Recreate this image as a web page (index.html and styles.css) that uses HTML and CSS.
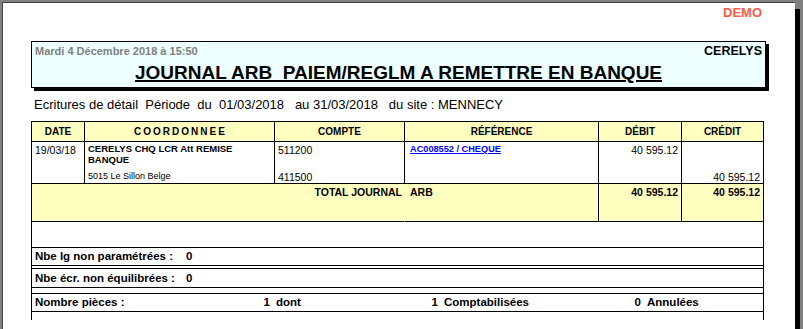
FILE: index.html
```html
<!DOCTYPE html>
<html lang="fr">
<head>
<meta charset="utf-8">
<title>Journal ARB</title>
<link rel="stylesheet" href="styles.css">
</head>
<body>
<div class="page">
  <div class="report">
    <div class="demo">DEMO</div>
    <div class="head-box">
      <div class="head-top">
        <span class="stamp">Mardi 4 Décembre 2018 à 15:50</span>
        <span class="company">CERELYS</span>
      </div>
      <h1 class="title">JOURNAL ARB  PAIEM/REGLM A REMETTRE EN BANQUE</h1>
    </div>
    <p class="period">Ecritures de détail  Période  du  01/03/2018   au 31/03/2018   du site : MENNECY</p>
    <div class="grid">
      <div class="th">DATE</div>
      <div class="th spaced">COORDONNEE</div>
      <div class="th">COMPTE</div>
      <div class="th">RÉFÉRENCE</div>
      <div class="th">DÉBIT</div>
      <div class="th">CRÉDIT</div>

      <div class="td"><span class="val">19/03/18</span></div>
      <div class="td">
        <span class="name">CERELYS CHQ LCR Att REMISE BANQUE</span>
        <span class="addr">5015 Le Sillon Belge</span>
      </div>
      <div class="td"><span class="val">511200</span><span class="val">411500</span></div>
      <div class="td td-ref"><a class="ref" href="#">AC008552 / CHEQUE</a></div>
      <div class="td num"><span class="val">40 595.12</span></div>
      <div class="td num bottom"><span class="val">40 595.12</span></div>

      <div class="tt tt-label">TOTAL JOURNAL</div>
      <div class="tt tt-ref">ARB</div>
      <div class="tt num">40 595.12</div>
      <div class="tt num">40 595.12</div>
    </div>
    <div class="summary">
      <div class="blank"></div>
      <div class="srow s1"><span>Nbe lg non paramétrées :</span><span>0</span></div>
      <div class="sgap g1"></div>
      <div class="srow s2"><span>Nbe écr. non équilibrées :</span><span>0</span></div>
      <div class="sgap g2"></div>
      <div class="srow s3">
        <span>Nombre pièces :</span>
        <span class="n">1</span>
        <span class="w">dont</span>
        <span class="n">1</span>
        <span class="w">Comptabilisées</span>
        <span class="n">0</span>
        <span class="w">Annulées</span>
      </div>
      <div class="tail"></div>
    </div>
  </div>
</div>
</body>
</html>
```
FILE: styles.css
```css
* { box-sizing: border-box; margin: 0; padding: 0; }
html, body { height: 100%; }
body {
  background: #808080;
  overflow: hidden;
  font-family: "Liberation Sans", Arial, sans-serif;
  color: #000;
  padding: 2px 0 0 2px;
}
.page {
  width: 793px;
  height: 327px;
  overflow: hidden;
  background: #fff;
  border-top: 1px solid #404040;
  border-left: 1px solid #404040;
  box-shadow: 5px 7px 0 #000;
  padding: 2px 0 0 28px;
}
.report { width: 735px; }
.demo {
  text-align: right;
  padding-right: 4px;
  font-size: 13px;
  line-height: 15px;
  font-weight: bold;
  color: #ff5a46;
}
.head-box {
  margin-top: 21px;
  border: 1px solid #000;
  background: #eeffff;
  box-shadow: 3px 3px 0 #000;
  padding: 2px 3px 3px 3px;
}
.head-top {
  display: flex;
  justify-content: space-between;
  align-items: baseline;
  height: 14px;
  line-height: 14px;
}
.stamp { font-size: 11px; font-weight: bold; color: #808080; }
.company { font-size: 12.5px; font-weight: bold; }
.title {
  margin-top: 4px;
  text-align: center;
  font-size: 19px;
  line-height: 22px;
  font-weight: bold;
  text-decoration: underline;
  text-decoration-thickness: 2px;
  text-underline-offset: 1px;
  white-space: pre;
}
.period {
  margin-top: 9px;
  padding-left: 3px;
  font-size: 13px;
  line-height: 16px;
  white-space: pre;
}
.grid {
  margin-top: 8px;
  width: 733px;
  display: grid;
  grid-template-columns: 53px 190px 130px 194px 83px 82px;
  border-top: 1px solid #000;
  border-left: 1px solid #000;
}
.grid > div {
  border-right: 1px solid #000;
  border-bottom: 1px solid #000;
}
.th {
  height: 20px;
  background: #ffffc0;
  font-size: 10px;
  font-weight: bold;
  line-height: 19px;
  text-align: center;
}
.spaced { letter-spacing: 2px; padding-left: 2px; }
.td {
  height: 42px;
  display: flex;
  flex-direction: column;
  justify-content: space-between;
  align-items: flex-start;
  padding: 2px 3px 0 3px;
  font-size: 10.5px;
  line-height: 12px;
}
.td.num { align-items: flex-end; }
.td.bottom { justify-content: flex-end; }
.name {
  display: block;
  max-width: 170px;
  font-size: 9.5px;
  line-height: 10.5px;
  font-weight: bold;
}
.addr {
  font-size: 9px;
  line-height: 11px;
  margin-bottom: 1px;
}
.td-ref { padding-left: 5px; }
.ref {
  font-size: 9.2px;
  line-height: 11px;
  font-weight: bold;
  color: #0000ff;
  text-decoration: underline;
}
.tt {
  height: 38px;
  background: #ffffc0;
  font-size: 10.5px;
  line-height: 12px;
  font-weight: bold;
  padding-top: 2px;
}
.grid > .tt-label {
  grid-column: span 3;
  text-align: right;
  padding-right: 2px;
  border-right-color: transparent;
}
.tt-ref { padding-left: 5px; }
.tt.num { text-align: right; padding-right: 3px; }
.summary {
  width: 733px;
  border-left: 1px solid #000;
  border-right: 1px solid #000;
}
.blank { height: 26px; border-bottom: 1px solid #000; }
.srow {
  display: grid;
  padding-left: 3px;
  font-size: 11.5px;
  font-weight: bold;
  border-bottom: 1px solid #000;
  white-space: nowrap;
}
.s1 { height: 18px; line-height: 17px; grid-template-columns: 151px auto; }
.s2 { height: 19px; line-height: 18px; grid-template-columns: 151px auto; }
.s3 { height: 18px; line-height: 17px; grid-template-columns: 215px 20px 148px 20px 183px 20px auto; }
.s3 .n { text-align: right; }
.s3 .w { padding-left: 6px; }
.sgap { border-bottom: 1px solid #000; }
.g1 { height: 3px; }
.g2 { height: 6px; }
.tail { height: 8px; }
```
